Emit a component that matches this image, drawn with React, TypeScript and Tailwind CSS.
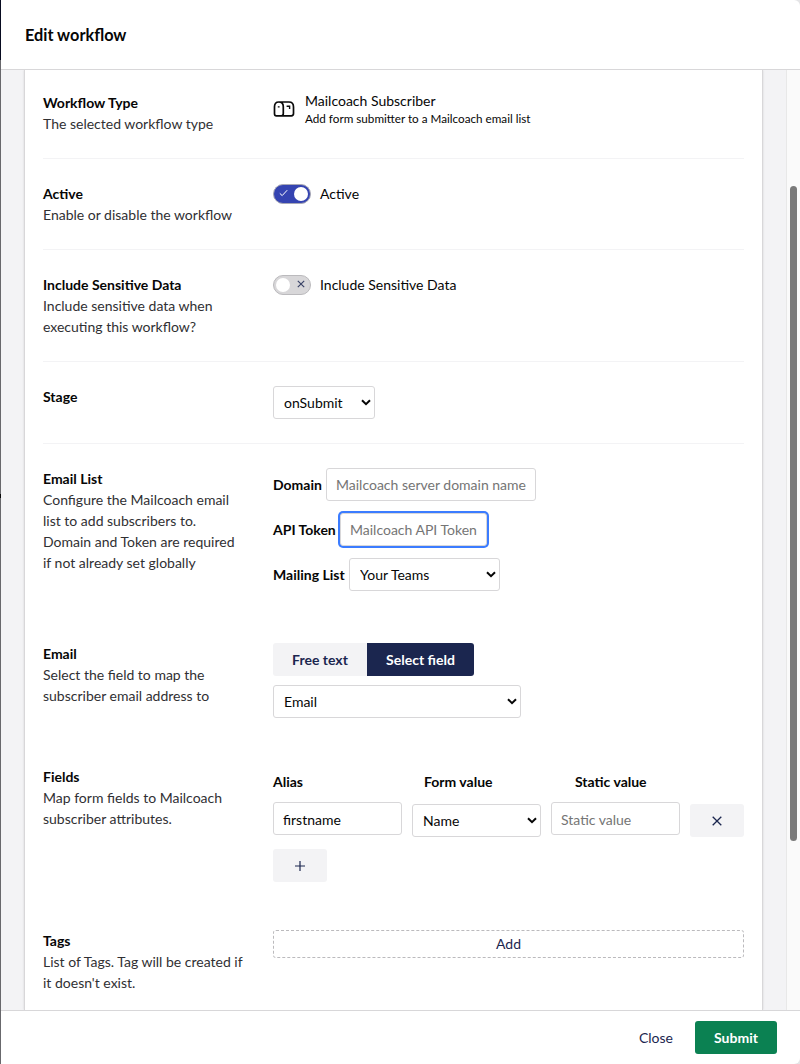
import type { ReactNode } from 'react';

type RowProps = { label: string; description?: string; divider?: boolean; height: string; children: ReactNode };

function Row({ label, description, divider, height, children }: RowProps) {
  return (
    <div className={`flex pt-6 ${height} ${divider ? 'border-b border-[#f3f3f5]' : ''}`}>
      <div className="w-[230px] shrink-0 pr-[28px] leading-[21px]">
        <div className="font-bold text-[#060606]">{label}</div>
        {description && <div className="text-[#303033]">{description}</div>}
      </div>
      <div className="min-w-0 flex-1">{children}</div>
    </div>
  );
}

function Select({ value, width }: { value: string; width: string }) {
  return (
    <div className={`relative h-[33px] ${width}`}>
      <select
        defaultValue={value}
        className="h-full w-full appearance-none rounded-[3px] border border-[#d8d7d9] bg-white pb-px pl-[10px] text-[14px] text-[#060606] outline-none"
      >
        <option>{value}</option>
      </select>
      <svg className="absolute top-[13px] right-[4px] h-[7px] w-[10px]" viewBox="0 0 10 7" fill="none" stroke="#060606" strokeWidth="2">
        <path d="M1 1.2 L5 5.2 L9 1.2" />
      </svg>
    </div>
  );
}

const field =
  'h-[33px] rounded-[3px] border border-[#d8d7d9] bg-white px-[9px] text-[14px] text-[#060606] placeholder:text-[#757575] outline-none';

function Toggle({ on }: { on?: boolean }) {
  return on ? (
    <span className="flex h-5 w-[38px] items-center justify-between rounded-full border border-[#a9a9b5] bg-[#3544b1] pr-[2px] pl-[5px]">
      <svg className="-mt-px h-[8px] w-[9px]" viewBox="0 0 9 8" fill="none" stroke="#fff" strokeWidth="1">
        <path d="M0.8 4.4 L3.2 6.6 L8.2 1.2" />
      </svg>
      <span className="h-[14px] w-[14px] rounded-full bg-white" />
    </span>
  ) : (
    <span className="flex h-5 w-[38px] items-center justify-between rounded-full border border-[#bbbabd] bg-[#d8d7d9] pr-[5px] pl-[2px]">
      <span className="h-[14px] w-[14px] rounded-full bg-white" />
      <svg className="-mt-px h-[8px] w-[8px]" viewBox="0 0 8 8" fill="none" stroke="#3b4468" strokeWidth="1.2">
        <path d="M0.8 0.8 L7.2 7.2 M7.2 0.8 L0.8 7.2" />
      </svg>
    </span>
  );
}

function Mailbox() {
  return (
    <svg className="mt-[9px] h-[16px] w-[22px] shrink-0" viewBox="0 0 22 16" fill="none" stroke="#0a0a0a" strokeWidth="1.7">
      <path d="M5.8 1 H16 Q20.5 1 20.5 6 V12.6 Q20.5 14.9 18.3 14.9 H3.4 Q1.5 14.9 1.5 12.7 V5.8 Q1.5 1 5.8 1 Q10.3 1 10.3 5.8 V12.6 Q10.3 14.9 8.4 14.9" />
      <path d="M4.8 5.9 H6.6 M13.6 5.2 H16.6 V8" strokeWidth="1.4" />
    </svg>
  );
}

export default function App() {
  return (
    <div className="flex h-[1064px] w-[800px] overflow-hidden bg-[#e4e4e6] font-['Lato','Liberation_Sans',sans-serif] text-[14px] text-[#060606]">
      <div className="flex w-px shrink-0 flex-col bg-[#68686c]">
        <div className="h-[60px] bg-[#080b20]" />
        <div className="mt-[434px] h-[4px] bg-[#080808]" />
      </div>
      <div className="flex min-w-0 flex-1 flex-col overflow-hidden rounded-r-[6px] bg-white">
        <header className="flex h-[70px] shrink-0 items-center border-b border-[#d8d7d9] pt-[2px] pl-6">
          <h3 className="text-[16.3px] font-bold">Edit workflow</h3>
        </header>

        <main className="flex min-h-0 flex-1 overflow-hidden bg-[#f3f3f5]">
          <div className="ml-[23px] h-full w-[739px] shrink-0 overflow-hidden border-x border-[#d8d7d9] bg-white px-[18px] shadow-[0_0_2px_rgba(0,0,0,0.12)]">
            <div className="-mt-[2px] flex flex-col">
              <Row label="Workflow Type" description="The selected workflow type" divider height="h-[91px]">
                <div className="flex">
                  <Mailbox />
                  <div className="ml-[10px]">
                    <div className="leading-[18px]">Mailcoach Subscriber</div>
                    <div className="text-[11.7px] leading-[16px]">Add form submitter to a Mailcoach email list</div>
                  </div>
                </div>
              </Row>
              <Row label="Active" description="Enable or disable the workflow" divider height="h-[91px]">
                <div className="flex h-[21px] items-center gap-[9px]">
                  <Toggle on />
                  <span>Active</span>
                </div>
              </Row>
              <Row label="Include Sensitive Data" description="Include sensitive data when executing this workflow?" divider height="h-[112px]">
                <div className="flex h-[21px] items-center gap-[9px]">
                  <Toggle />
                  <span>Include Sensitive Data</span>
                </div>
              </Row>
              <Row label="Stage" divider height="h-[82px]">
                <Select value="onSubmit" width="w-[102px]" />
              </Row>
              <Row
                label="Email List"
                description="Configure the Mailcoach email list to add subscribers to. Domain and Token are required if not already set globally"
                height="h-[175px]"
              >
                <div className="flex flex-col gap-3">
                  <label className="flex items-center">
                    <b className="w-[53px] whitespace-nowrap">Domain</b>
                    <input className={`${field} w-[210px]`} placeholder="Mailcoach server domain name" />
                  </label>
                  <label className="flex items-center">
                    <b className="w-[67px] whitespace-nowrap">API Token</b>
                    <input className={`${field} w-[147px] ring-2 ring-[#3b7cff]`} placeholder="Mailcoach API Token" />
                  </label>
                  <label className="flex items-center">
                    <b className="w-[76px] whitespace-nowrap">Mailing List</b>
                    <Select value="Your Teams" width="w-[151px]" />
                  </label>
                </div>
              </Row>
              <Row label="Email" description="Select the field to map the subscriber email address to" height="h-[123px]">
                <div className="flex h-[33px] w-[201px] overflow-hidden rounded-[3px]">
                  <button className="w-[94px] bg-[#f3f3f5] font-bold text-[#1b264f]">Free text</button>
                  <button className="w-[107px] bg-[#1b264f] font-bold text-white">Select field</button>
                </div>
                <div className="mt-[9px]">
                  <Select value="Email" width="w-[248px]" />
                </div>
              </Row>
              <Row label="Fields" description="Map form fields to Mailcoach subscriber attributes." height="h-[164px]">
                <div className="flex h-[31px] items-center font-bold">
                  <span className="w-[151px]">Alias</span>
                  <span className="w-[151px]">Form value</span>
                  <span>Static value</span>
                </div>
                <div className="mt-[5px] flex items-start gap-[10px]">
                  <input className={`${field} w-[129px] pt-[2px]`} defaultValue="firstname" />
                  <div className="mt-[2px]">
                    <Select value="Name" width="w-[129px]" />
                  </div>
                  <input className={`${field} w-[129px] pt-[2px]`} placeholder="Static value" />
                  <button className="mt-[2px] flex h-[33px] w-[54px] items-center justify-center rounded-[3px] bg-[#f3f3f5]">
                    <svg className="h-[10px] w-[10px]" viewBox="0 0 10 10" stroke="#1b264f" strokeWidth="1.3">
                      <path d="M0.7 0.7 L9.3 9.3 M9.3 0.7 L0.7 9.3" />
                    </svg>
                  </button>
                </div>
                <button className="mt-[12px] flex h-[33px] w-[54px] items-center justify-center rounded-[3px] bg-[#f3f3f5]">
                  <svg className="h-[10px] w-[10px]" viewBox="0 0 10 10" stroke="#1b264f" strokeWidth="1.2">
                    <path d="M5 0 V10 M0 5 H10" />
                  </svg>
                </button>
              </Row>
              <Row label="Tags" description="List of Tags. Tag will be created if it doesn't exist." height="h-[120px]">
                <button className="flex h-[28px] w-full items-center justify-center rounded-[3px] border border-dashed border-[#bbbabd] pb-[2px] text-[#1b264f]">
                  Add
                </button>
              </Row>
            </div>
          </div>
          <div className="ml-auto w-[14px] shrink-0 border-l border-[#e8e8e8] bg-[#fafafa]">
            <div className="mt-[116px] ml-[3px] h-[655px] w-[7px] rounded-full bg-[#7a7a7a]" />
          </div>
        </main>

        <footer className="flex h-[54px] shrink-0 items-center justify-end border-t border-[#d8d7d9] pr-[23px]">
          <button className="mr-[22px] text-[#1b264f]">Close</button>
          <button className="h-[33px] w-[82px] rounded-[3px] bg-[#0b8152] font-bold text-white">Submit</button>
        </footer>
      </div>
    </div>
  );
}
